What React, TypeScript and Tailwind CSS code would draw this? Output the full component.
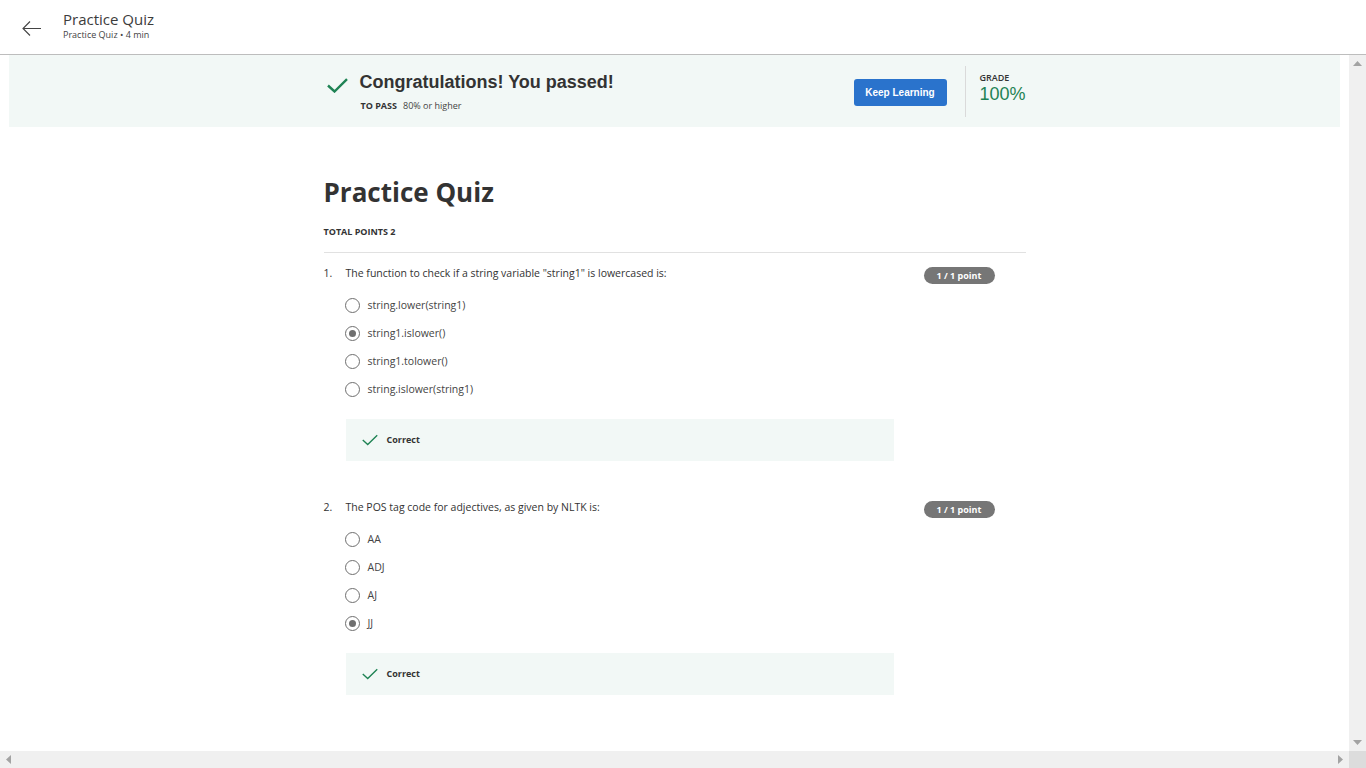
import React from "react";

const Check = ({ w, h, sw }: { w: number; h: number; sw: number }) => (
  <svg width={w} height={h} viewBox="0 0 21 15" fill="none">
    <path d="M1 7.5 L7.5 13.5 L20 1.2" stroke="#1f8354" strokeWidth={sw} fill="none" />
  </svg>
);

const Radio = ({ checked }: { checked?: boolean }) => (
  <div className="-ml-px flex h-[15px] w-[15px] shrink-0 items-center justify-center rounded-full border-[1.5px] border-[#6f6f6f] bg-white">
    {checked && <div className="h-[7px] w-[7px] rounded-full bg-[#6f6f6f]" />}
  </div>
);

type Q = { n: string; text: string; options: string[]; sel: number; first?: boolean };

const Question = ({ n, text, options, sel, first }: Q) => (
  <div className={`flex items-start ${first ? "mt-[13px]" : "mt-[39px]"}`}>
    <div className="w-[22px] shrink-0 text-[10.5px] leading-[14px] text-[#333]">{n}</div>
    <div className="w-[548px] shrink-0">
      <div className="text-[10.5px] leading-[14px] text-[#333]">{text}</div>
      <div className="mt-[11px] flex flex-col">
        {options.map((o, i) => (
          <div key={o} className="flex h-[28px] items-center">
            <Radio checked={i === sel} />
            <span className="ml-[8px] text-[10.5px] leading-[14px] text-[#444]">{o}</span>
          </div>
        ))}
      </div>
      <div className="mt-[16px] flex h-[42px] items-center bg-[#f2f8f6] pl-[16px]">
        <Check w={16} h={12} sw={1.8} />
        <span className="ml-[9px] text-[9px] font-bold leading-[12px] text-[#333]">Correct</span>
      </div>
    </div>
    <div className="ml-[30px] mt-[1px] flex h-[17px] w-[71px] shrink-0 items-center justify-center rounded-full bg-[#767676] text-[9px] font-bold leading-[12px] text-white">
      1 / 1 point
    </div>
  </div>
);

export default function App() {
  return (
    <div className="flex h-screen w-full flex-col overflow-hidden bg-white font-['Open_Sans',sans-serif] text-[#333]">
      {/* header */}
      <header className="flex h-[55px] shrink-0 items-start border-b border-[#bdbdbd] pt-[10px]">
        <svg className="ml-[22px] mt-[11px]" width="19" height="15" viewBox="0 0 19 15" fill="none">
          <path d="M1 7.5 H19 M8 0.5 L1 7.5 L8 14.5" stroke="#444" strokeWidth="1.1" />
        </svg>
        <div className="ml-[22px] flex flex-col">
          <div className="text-[15px] leading-[19px] text-[#3c3c3c]">Practice Quiz</div>
          <div className="text-[9px] leading-[12px] text-[#444]">Practice Quiz • 4 min</div>
        </div>
      </header>

      <div className="flex min-h-0 flex-1">
        <div className="min-w-0 flex-1 overflow-hidden">
          {/* banner */}
          <div className="mx-[9px] h-[72px] bg-[#f2f8f6] pt-[11px]">
            <div className="mx-auto flex w-[702px] items-start">
              <div className="ml-[3px] mt-[12px]">
                <Check w={21} h={15} sw={2.4} />
              </div>
              <div className="ml-[12px] mt-[5px] flex flex-col">
                <div className="font-['Liberation_Sans',Arial,sans-serif] text-[18px] font-bold leading-[22px] text-[#333]">
                  Congratulations! You passed!
                </div>
                <div className="mt-[7px] flex pl-px text-[9px] leading-[12px]">
                  <span className="font-bold text-[#333]">TO PASS</span>
                  <span className="ml-[6px] text-[#444]">80% or higher</span>
                </div>
              </div>
              <button className="ml-auto mt-[13px] flex h-[27px] w-[93px] items-center justify-center rounded-[3px] bg-[#2a73cc] font-['Liberation_Sans',Arial,sans-serif] text-[10px] font-bold text-white">
                Keep Learning
              </button>
              <div className="ml-[18px] h-[51px] w-px bg-[#dadada]" />
              <div className="ml-[14px] mt-[6px] flex w-[46px] flex-col">
                <div className="text-[9px] font-semibold leading-[12px] text-[#333]">GRADE</div>
                <div className="font-['Liberation_Sans',Arial,sans-serif] text-[18px] leading-[20px] text-[#1f8354]">100%</div>
              </div>
            </div>
          </div>

          {/* content */}
          <div className="mx-auto w-[702px]">
            <h1 className="mt-[47px] text-[26px] font-bold leading-[36px] text-[#333]">Practice Quiz</h1>
            <div className="mt-[16px] text-[9px] font-bold leading-[12px] text-[#333]">TOTAL POINTS 2</div>
            <div className="mt-[14px] h-px bg-[#e1e1e1]" />
            <Question
              first
              n="1."
              text={'The function to check if a string variable "string1" is lowercased is:'}
              options={["string.lower(string1)", "string1.islower()", "string1.tolower()", "string.islower(string1)"]}
              sel={1}
            />
            <Question
              n="2."
              text="The POS tag code for adjectives, as given by NLTK is:"
              options={["AA", "ADJ", "AJ", "JJ"]}
              sel={3}
            />
          </div>
        </div>
        {/* vertical scrollbar */}
        <div className="flex w-[17px] shrink-0 flex-col items-center justify-between bg-[#f0f0f0] py-[6px]">
          <svg width="9" height="5" viewBox="0 0 9 5">
            <path d="M0 5 L4.5 0 L9 5 Z" fill="#a3a3a3" />
          </svg>
          <svg width="9" height="5" viewBox="0 0 9 5">
            <path d="M0 0 L4.5 5 L9 0 Z" fill="#a3a3a3" />
          </svg>
        </div>
      </div>
      {/* horizontal scrollbar */}
      <div className="flex h-[17px] shrink-0">
        <div className="flex flex-1 items-center justify-between bg-[#f0f0f0] px-[6px]">
          <svg width="5" height="9" viewBox="0 0 5 9">
            <path d="M5 0 L0 4.5 L5 9 Z" fill="#a3a3a3" />
          </svg>
          <svg width="5" height="9" viewBox="0 0 5 9">
            <path d="M0 0 L5 4.5 L0 9 Z" fill="#a3a3a3" />
          </svg>
        </div>
        <div className="w-[17px] bg-[#dcdcdc]" />
      </div>
    </div>
  );
}
